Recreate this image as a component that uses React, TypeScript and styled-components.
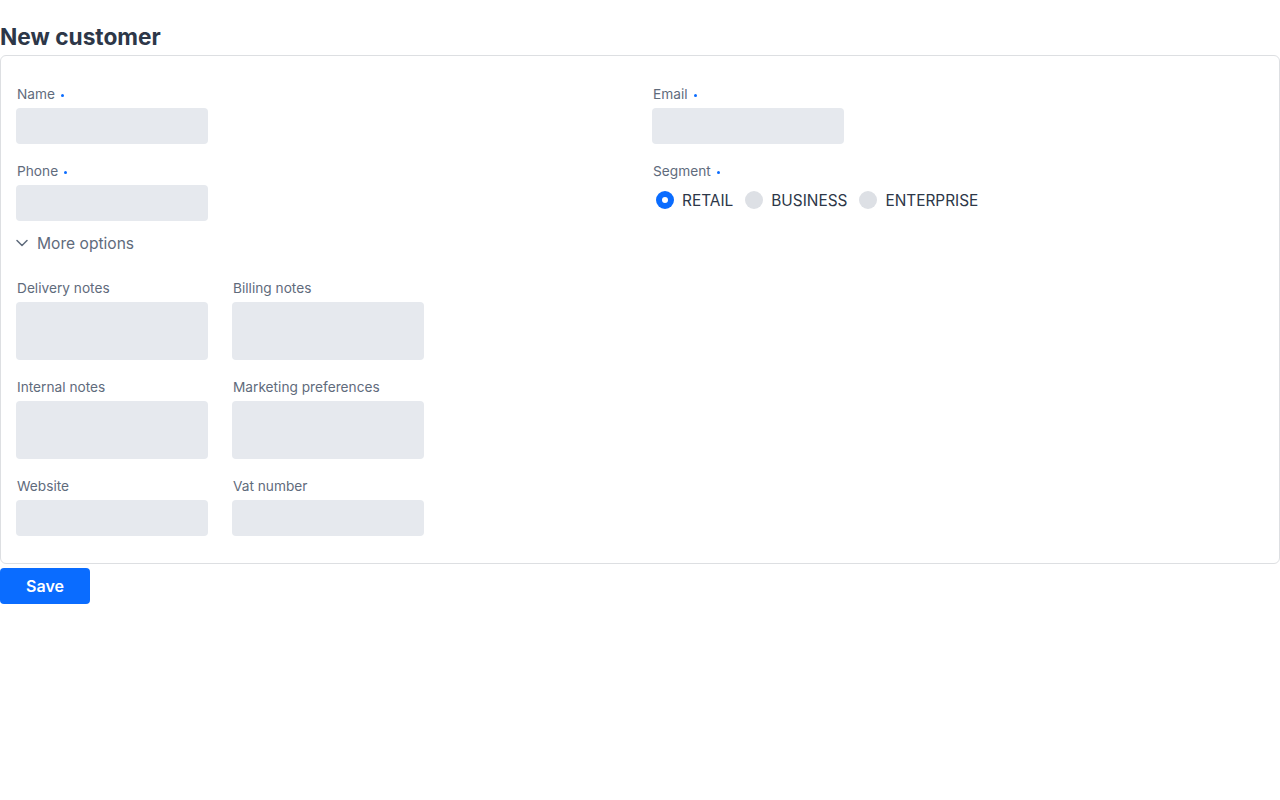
import React, { useState } from "react";
import styled, { createGlobalStyle } from "styled-components";

const GlobalStyle = createGlobalStyle`
  body {
    margin: 0;
    font-family: Inter, "Noto Sans", sans-serif;
    background: #fff;
    color: #2d3748;
  }
`;

const Page = styled.div`
  padding-top: 22px;
`;

const Title = styled.h1`
  margin: 0 0 4px;
  font-size: 22.7px;
  line-height: 29px;
  font-weight: 700;
  color: #2d3748;
`;

const Card = styled.div`
  border: 1px solid #dddfe2;
  border-radius: 6px;
  padding: 28px 15px 27px;
`;

const Columns = styled.div`
  display: grid;
  grid-template-columns: 1fr 1fr;
  column-gap: 24px;
`;

const Column = styled.div`
  display: flex;
  flex-direction: column;
  gap: 17px;
`;

const Field = styled.div`
  display: flex;
  flex-direction: column;
  align-items: flex-start;
`;

const Label = styled.label`
  display: flex;
  align-items: center;
  gap: 6px;
  height: 20px;
  margin: 0 0 4px 1px;
  font-size: 13.7px;
  color: #5f6b7c;
`;

const RequiredDot = styled.span`
  width: 3px;
  height: 3px;
  border-radius: 50%;
  background: #0a6cff;
  margin-top: 2px;
`;

const Input = styled.div<{ $tall?: boolean }>`
  width: 192px;
  height: ${({ $tall }) => ($tall ? "58px" : "36px")};
  background: #e6e9ee;
  border-radius: 4px;
`;

const RadioRow = styled.div`
  display: flex;
  align-items: center;
  gap: 12px;
  margin-left: 4px;
  height: 30px;
`;

const RadioOption = styled.label`
  display: flex;
  align-items: center;
  gap: 8px;
  font-size: 15.4px;
  color: #2d3748;
  cursor: pointer;
`;

const RadioCircle = styled.span<{ $checked: boolean }>`
  width: 18px;
  height: 18px;
  border-radius: 50%;
  background: ${({ $checked }) => ($checked ? "#0a6cff" : "#dde0e5")};
  display: flex;
  align-items: center;
  justify-content: center;
  &::after {
    content: "";
    width: 6px;
    height: 6px;
    border-radius: 50%;
    background: #fff;
    display: ${({ $checked }) => ($checked ? "block" : "none")};
  }
`;

const Toggle = styled.button`
  display: flex;
  align-items: center;
  gap: 9px;
  padding: 0;
  margin: -5px 0 1px;
  height: 20px;
  border: none;
  background: none;
  font-family: inherit;
  font-size: 15.6px;
  color: #5f6b7c;
  cursor: pointer;
`;

const Extra = styled.div`
  display: grid;
  grid-template-columns: 192px 192px;
  column-gap: 24px;
  row-gap: 17px;
  margin-top: 7px;
`;

const SaveButton = styled.button`
  margin-top: 4px;
  width: 90px;
  height: 36px;
  border: none;
  border-radius: 4px;
  background: #0a6cff;
  color: #fff;
  font-family: inherit;
  font-size: 16px;
  font-weight: 600;
  cursor: pointer;
`;

const segments = ["RETAIL", "BUSINESS", "ENTERPRISE"];

const extraFields = [
  { label: "Delivery notes", tall: true },
  { label: "Billing notes", tall: true },
  { label: "Internal notes", tall: true },
  { label: "Marketing preferences", tall: true },
  { label: "Website", tall: false },
  { label: "Vat number", tall: false },
];

function Chevron() {
  return (
    <svg width="12" height="8" viewBox="0 0 12 8" fill="none" stroke="#5f6b7c" strokeWidth="1.5" strokeLinecap="round" strokeLinejoin="round">
      <path d="M1 1.5 6 6.5 11 1.5" />
    </svg>
  );
}

export default function App() {
  const [segment, setSegment] = useState("RETAIL");
  const [open, setOpen] = useState(true);

  return (
    <Page>
      <GlobalStyle />
      <Title>New customer</Title>
      <Card>
        <Columns>
          <Column>
            <Field>
              <Label>
                Name <RequiredDot />
              </Label>
              <Input />
            </Field>
            <Field>
              <Label>
                Phone <RequiredDot />
              </Label>
              <Input />
            </Field>
            <Toggle onClick={() => setOpen(!open)}>
              <Chevron />
              More options
            </Toggle>
            {open && (
              <Extra>
                {extraFields.map((f) => (
                  <Field key={f.label}>
                    <Label>{f.label}</Label>
                    <Input $tall={f.tall} />
                  </Field>
                ))}
              </Extra>
            )}
          </Column>
          <Column>
            <Field>
              <Label>
                Email <RequiredDot />
              </Label>
              <Input />
            </Field>
            <Field>
              <Label>
                Segment <RequiredDot />
              </Label>
              <RadioRow>
                {segments.map((s) => (
                  <RadioOption key={s} onClick={() => setSegment(s)}>
                    <RadioCircle $checked={segment === s} />
                    {s}
                  </RadioOption>
                ))}
              </RadioRow>
            </Field>
          </Column>
        </Columns>
      </Card>
      <SaveButton>Save</SaveButton>
    </Page>
  );
}
